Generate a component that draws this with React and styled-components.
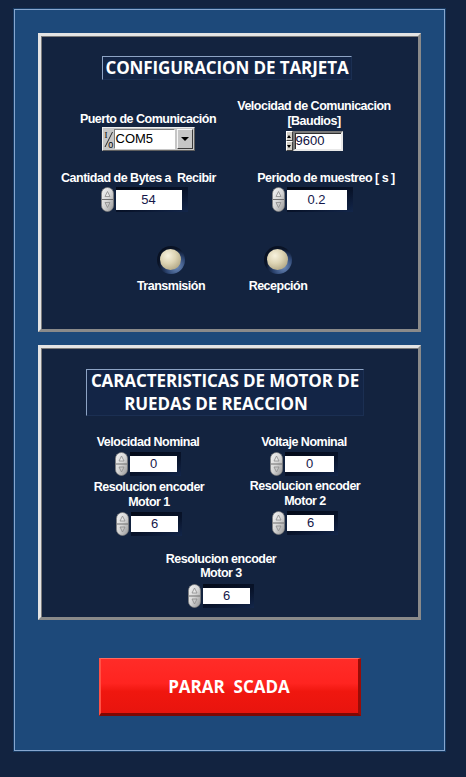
import React from 'react';
import styled, { createGlobalStyle } from 'styled-components';

const Global = createGlobalStyle`
  html, body { margin: 0; padding: 0; background: #122340; }
  body { width: 466px; height: 777px; overflow: hidden; }
`;

const Page = styled.div`
  width: 466px;
  height: 777px;
  box-sizing: border-box;
  padding: 9px 0 0 14px;
  background: #122340;
`;

const Frame = styled.div`
  width: 431px;
  height: 742px;
  box-sizing: border-box;
  background: #1d497a;
  border: 1px solid #86a6cf;
  box-shadow: 0 0 0 1px #173a63;
  padding: 23px 23px 0 23px;
  display: flex;
  flex-direction: column;
`;

const Panel = styled.section`
  height: ${(p) => p.$h}px;
  box-sizing: border-box;
  margin-top: ${(p) => p.$mt || 0}px;
  background: #13233f;
  border: 3px solid;
  border-color: #e4e4e4 #8a8a8a #8a8a8a #e4e4e4;
  box-shadow: inset 1px 1px 0 #7b7b7b;
  display: flex;
  flex-direction: column;
`;

const TitleBox = styled.h1`
  margin: ${(p) => p.$mt}px 0 0 ${(p) => p.$ml}px;
  width: ${(p) => p.$w}px;
  box-sizing: border-box;
  border: 1px solid;
  border-color: #8da3c4 #1b2f52 #1b2f52 #8da3c4;
  background: #132546;
  font: 700 17px/${(p) => p.$lh}px "Open Sans", "Liberation Sans", sans-serif;
  letter-spacing: -0.1px;
  color: #ffffff;
  text-align: center;
  white-space: pre;
`;

const TitleLine = styled.span`
  display: block;
  padding-right: ${(p) => p.$pr || 0}px;
`;

const Row = styled.div`
  display: flex;
  align-items: ${(p) => p.$align || 'flex-start'};
  margin-top: ${(p) => p.$mt}px;
`;

const Field = styled.div`
  flex: none;
  display: flex;
  flex-direction: column;
  align-items: center;
  width: ${(p) => p.$w}px;
  margin-left: ${(p) => p.$ml}px;
`;

const Label = styled.div`
  font: 700 12.5px/${(p) => p.$lh || 14}px "Liberation Sans", Arial, sans-serif;
  letter-spacing: -0.5px;
  color: #ffffff;
  text-align: center;
  white-space: pre;
  margin: ${(p) => p.$mt || 0}px ${(p) => p.$mr || 0}px ${(p) => p.$mb || 0}px ${(p) => p.$ml || 0}px;
`;

/* Spin numeric (LabVIEW modern numeric) */
const Spin = styled.div`
  display: flex;
  align-items: center;
  gap: ${(p) => p.$gap ?? 2}px;
  margin-right: ${(p) => p.$mr || 0}px;
`;

const Well = styled.div`
  display: flex;
  padding: ${(p) => p.$pad};
  background: linear-gradient(160deg, #040a18 0%, #08132a 55%, #13264a 100%);
`;

const NumBox = styled.div`
  width: ${(p) => p.$w}px;
  height: ${(p) => p.$h}px;
  background: #ffffff;
  font: 400 13px/${(p) => p.$h}px "Liberation Sans", Arial, sans-serif;
  color: #15174a;
  text-align: center;
`;

const Spinner = ({ h = 24 }) => {
  const m = h / 2;
  return (
    <svg width="13" height={h} viewBox={`0 0 13 ${h}`}>
      <defs>
        <linearGradient id="spinFill" x1="0" y1="0" x2="1" y2="1">
          <stop offset="0" stopColor="#f4f4f4" />
          <stop offset="0.5" stopColor="#d6d6d6" />
          <stop offset="1" stopColor="#959595" />
        </linearGradient>
      </defs>
      <rect x="0.5" y="0.5" width="12" height={h - 1} rx="6" fill="url(#spinFill)" stroke="#7d7d7d" strokeWidth="0.7" />
      <line x1="1" x2="12" y1={m} y2={m} stroke="#6e6e6e" strokeWidth="1" />
      <path d={`M6.5 ${m - 8} L9 ${m - 3} L4 ${m - 3} Z`} fill="#e6e6e6" stroke="#8a8a8a" strokeWidth="0.8" />
      <path d={`M6.5 ${m + 8} L9 ${m + 3} L4 ${m + 3} Z`} fill="#c8c8c8" stroke="#8a8a8a" strokeWidth="0.8" />
    </svg>
  );
};

const SpinControl = ({ value, w, h, spinH, pad, mr, gap }) => (
  <Spin $mr={mr} $gap={gap}>
    <Spinner h={spinH} />
    <Well $pad={pad}>
      <NumBox $w={w} $h={h}>{value}</NumBox>
    </Well>
  </Spin>
);

/* Classic numeric (9600) */
const Classic = styled.div`
  display: flex;
  align-items: stretch;
  height: 20px;
`;

const Arrows = styled.div`
  display: flex;
  flex-direction: column;
  width: 7px;
`;

const ArrowBtn = styled.div`
  flex: 1;
  background: #d4d0c8;
  border: 1px solid;
  border-color: #ffffff #404040 #404040 #ffffff;
  box-sizing: border-box;
  display: flex;
  align-items: center;
  justify-content: center;
  &::after {
    content: '';
    border-left: 2px solid transparent;
    border-right: 2px solid transparent;
    ${(p) => (p.$up ? 'border-bottom: 3px solid #000;' : 'border-top: 3px solid #000;')}
  }
`;

const ClassicBox = styled.div`
  width: 50px;
  box-sizing: border-box;
  background: #ffffff;
  border: 2px solid;
  border-color: #7a7a7a #e8e8e8 #e8e8e8 #7a7a7a;
  box-shadow: inset 1px 1px 0 #303030;
  font: 400 13px/16px "Liberation Sans", Arial, sans-serif;
  color: #0e1040;
  padding-left: 1px;
`;

/* Ring (COM5) */
const Ring = styled.div`
  display: flex;
  align-items: stretch;
  width: 93px;
  height: 24px;
  box-sizing: border-box;
  background: #c6c6c6;
  border: 1px solid;
  border-color: #efefef #5e5e5e #5e5e5e #efefef;
  padding: 1px;
`;

const RingText = styled.div`
  flex: 1;
  background: #ffffff;
  border: 1px solid;
  border-color: #7a7a7a #ffffff #ffffff #7a7a7a;
  font: 400 13px/18px "Liberation Sans", Arial, sans-serif;
  color: #000;
  padding-left: 1px;
`;

const RingButton = styled.div`
  width: 16px;
  margin-left: 2px;
  box-sizing: border-box;
  background: #c6c6c6;
  border: 1px solid;
  border-color: #f6f6f6 #3c3c3c #3c3c3c #f6f6f6;
  display: flex;
  align-items: center;
  justify-content: center;
  &::after {
    content: '';
    border-left: 4px solid transparent;
    border-right: 4px solid transparent;
    border-top: 4px solid #000;
  }
`;

const IOTag = () => (
  <svg width="10" height="20" viewBox="0 0 10 20">
    <text x="0.5" y="8.5" fontSize="9" fontFamily="Liberation Serif, serif" fill="#000">I</text>
    <line x1="1" y1="18" x2="8.5" y2="3" stroke="#000" strokeWidth="0.8" />
    <text x="4.2" y="18.5" fontSize="9" fontFamily="Liberation Sans, sans-serif" fill="#000">0</text>
  </svg>
);

/* LED */
const Led = styled.div`
  width: 28px;
  height: 28px;
  border-radius: 50%;
  background: radial-gradient(circle at 70% 74%, #6d8cbc 0%, #2c4470 38%, #0a1428 62%, #050b18 100%);
  display: flex;
  align-items: center;
  justify-content: center;
  &::after {
    content: '';
    width: 21px;
    height: 21px;
    margin: -2px 0 0 -2px;
    border-radius: 50%;
    background: radial-gradient(circle at 38% 32%, #f7f2de 0%, #ddd4b4 40%, #b1a785 80%, #8e8568 100%);
  }
`;

const StopButton = styled.button`
  align-self: center;
  margin-top: 38px;
  width: 262px;
  height: 58px;
  box-sizing: border-box;
  padding: 0;
  background: linear-gradient(#ff2c28 0%, #ff2420 45%, #f0170f 60%, #e8140e 100%);
  border-style: solid;
  border-width: 1px 3px 3px 2px;
  border-color: #ff6a5e #9a0c07 #7e0804 #ff5246;
  color: #ffffff;
  font: 700 17px/1 "Open Sans", "Liberation Sans", sans-serif;
  white-space: pre;
  cursor: pointer;
`;

export default function App() {
  return (
    <Page>
      <Global />
      <Frame>
        <Panel $h={299}>
          <TitleBox $mt={20} $ml={61} $w={250} $lh={22}>CONFIGURACION DE TARJETA</TitleBox>

          <Row $mt={19} $align="flex-end">
            <Field $w={160} $ml={27}>
              <Label $mb={1}>Puerto de Comunicación</Label>
              <Ring>
                <IOTag />
                <RingText>COM5</RingText>
                <RingButton />
              </Ring>
            </Field>
            <Field $w={160} $ml={6}>
              <Label $lh={15} $mb={2}>{'Velocidad de Comunicacion\n[Baudios]'}</Label>
              <Classic>
                <Arrows>
                  <ArrowBtn $up />
                  <ArrowBtn />
                </Arrows>
                <ClassicBox>9600</ClassicBox>
              </Classic>
            </Field>
          </Row>

          <Row $mt={20}>
            <Field $w={170} $ml={18}>
              <Label $mb={2} $mr={11}>{'Cantidad de Bytes a  Recibir'}</Label>
              <SpinControl value="54" w={66} h={20} spinH={25} pad="3px 6px 2px 0" gap={2} />
            </Field>
            <Field $w={156} $ml={12}>
              <Label $mb={2} $ml={14}>{'Periodo de muestreo [ s ]'}</Label>
              <SpinControl value="0.2" w={60} h={20} spinH={25} pad="3px 6px 2px 0" gap={2} mr={14} />
            </Field>
          </Row>

          <Row $mt={34}>
            <Field $w={90} $ml={85}>
              <Led />
              <Label $mt={5}>Transmisión</Label>
            </Field>
            <Field $w={90} $ml={17}>
              <Led />
              <Label $mt={5}>Recepción</Label>
            </Field>
          </Row>
        </Panel>

        <Panel $h={275} $mt={13}>
          <TitleBox $mt={21} $ml={45} $w={278} $lh={22.5}>
            <TitleLine>CARACTERISTICAS DE MOTOR DE</TitleLine>
            <TitleLine $pr={18}>RUEDAS DE REACCION</TitleLine>
          </TitleBox>

          <Row $mt={19}>
            <Field $w={150} $ml={32}>
              <Label $mb={3}>Velocidad Nominal</Label>
              <SpinControl value="0" w={47} h={16} spinH={24} pad="4px 4px 4px 0" />
            </Field>
            <Field $w={150} $ml={6}>
              <Label $mb={3}>Voltaje Nominal</Label>
              <SpinControl value="0" w={49} h={16} spinH={24} pad="4px 4px 4px 0" />
            </Field>
          </Row>

          <Row $mt={4}>
            <Field $w={150} $ml={33}>
              <Label $lh={15} $mb={2}>{'Resolucion encoder\nMotor 1'}</Label>
              <SpinControl value="6" w={47} h={16} spinH={24} pad="4px 4px 4px 0" />
            </Field>
            <Field $w={150} $ml={6}>
              <Label $lh={15} $mb={2} $mt={-1}>{'Resolucion encoder\nMotor 2'}</Label>
              <SpinControl value="6" w={47} h={16} spinH={24} pad="4px 4px 4px 0" />
            </Field>
          </Row>

          <Row $mt={16}>
            <Field $w={150} $ml={105}>
              <Label $mb={4}>{'Resolucion encoder\nMotor 3'}</Label>
              <SpinControl value="6" w={47} h={16} spinH={24} pad="4px 4px 4px 0" />
            </Field>
          </Row>
        </Panel>

        <StopButton>{'PARAR  SCADA'}</StopButton>
      </Frame>
    </Page>
  );
}
